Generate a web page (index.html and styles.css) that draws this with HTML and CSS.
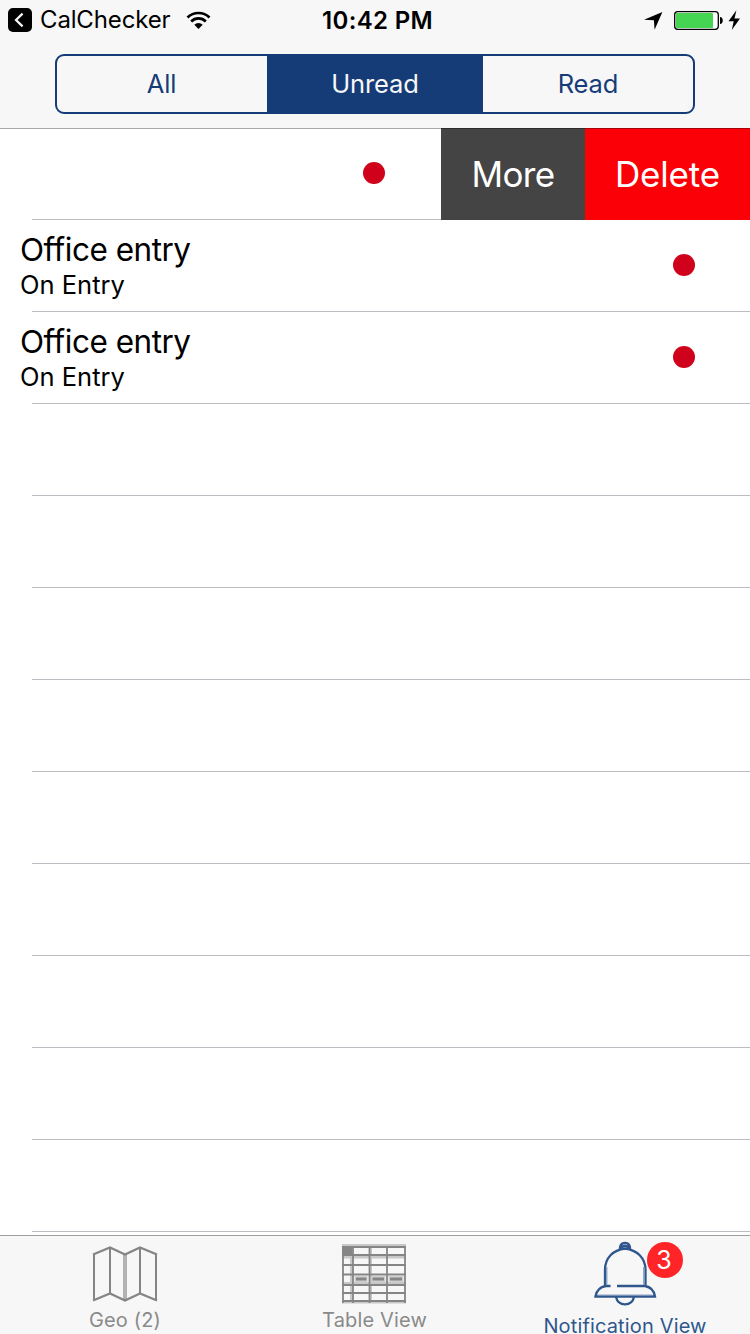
FILE: index.html
```html
<!DOCTYPE html>
<html lang="en">
<head>
<meta charset="utf-8">
<title>Notifications</title>
<link rel="stylesheet" href="styles.css">
</head>
<body>
<div class="screen">
  <header class="header">
    <div class="status">
      <div class="status-left">
        <svg class="back-icon" width="24" height="24" viewBox="0 0 24 24"><rect width="24" height="24" rx="5"/><path d="M14.600 5.600 8 12l6.600 6.400" fill="none" stroke="#f7f7f7" stroke-width="2.200"/></svg>
        <span class="back-app">CalChecker</span>
        <svg class="wifi-icon" width="25" height="19" viewBox="0 0 26 20"><g fill="none" stroke="#000" stroke-width="2.800"><path d="M1.400 6.900a16.400 16.400 0 0 1 23.200 0"/><path d="M5.300 11a10.900 10.900 0 0 1 15.400 0"/></g><path d="M8.600 14.400a6.200 6.200 0 0 1 8.800 0L13 19z"/></svg>
      </div>
      <span class="clock">10:42 PM</span>
      <div class="status-right">
        <svg width="98" height="24" viewBox="0 0 98 24"><path d="M18.400 4 10.600 21.800 9.900 12.300 0 11.800z"/><rect x="30.700" y="3.700" width="43.600" height="17.600" rx="3" fill="#fff" stroke="#000" stroke-width="1.300"/><rect x="32" y="5" width="37" height="15" rx="1" fill="#45d553"/><path d="M76 9c3.700 0 3.700 7 0 7z"/><path d="M92.400 2.200 84.500 13.200h5.200L87.800 22 96 10.600h-5.500z"/></svg>
      </div>
    </div>
    <div class="segments">
      <div class="segment all">All</div>
      <div class="segment selected">Unread</div>
      <div class="segment">Read</div>
    </div>
  </header>
  <main class="list">
    <div class="row swiped">
      <span class="dot"></span>
      <div class="action more">More</div>
      <div class="action delete">Delete</div>
    </div>
    <div class="row entry"><div><div class="title">Office entry</div><div class="subtitle">On Entry</div></div><span class="dot"></span></div>
    <div class="row entry"><div><div class="title">Office entry</div><div class="subtitle">On Entry</div></div><span class="dot"></span></div>
    <div class="row"></div>
    <div class="row"></div>
    <div class="row"></div>
    <div class="row"></div>
    <div class="row"></div>
    <div class="row"></div>
    <div class="row"></div>
    <div class="row"></div>
    <div class="row"></div>
  </main>
  <nav class="tabs">
    <div class="tab">
      <svg width="66" height="66" viewBox="92 1240 66 66" fill="none" stroke="#858585"><path d="M125 1254v46" stroke="#b2b2b2" stroke-width="4"/><path d="M110 1248v46M140 1248v46M94 1254v46M156 1254v46" stroke-width="2"/><path d="m93 1254.500 17-7 15 7 15-7 17 7M93 1300.500l17-7 15 7 15-7 17 7" stroke-width="2.300"/></svg>
      <span class="label">Geo (2)</span>
    </div>
    <div class="tab">
      <svg width="66" height="66" viewBox="342 1240 66 66"><g fill="none" stroke="#c8c8c8" stroke-width="3"><path d="M342 1245.500h64M342 1257h64M342 1283.500h64M342 1302h64M351.500 1245v58M370.500 1245v58"/></g><g fill="none" stroke="#858585" stroke-width="1.800"><path d="M342 1247h64M342 1255h64M342 1265h64M342 1274.500h64M342 1285h64M342 1293h64M342 1301h64M343 1246v57M353 1246v57M369.500 1246v57M387 1246v57M405 1246v57"/></g><path d="M342 1246h10v9h-10z" fill="#858585"/><path d="M354.500 1276h13v6h-13zM371 1276h14.500v6h-14.500zM388.500 1276h15v6h-15z" fill="#cfcfcf"/><path d="M356 1277.500h10.500v3h-10.500zM372.500 1277.500h11.500v3h-11.500zM390 1277.500h12v3h-12z" fill="#858585"/></svg>
      <span class="label table">Table View</span>
    </div>
    <div class="tab active">
      <div class="bell">
        <svg width="66" height="66" viewBox="592 1240 66 66" fill="none" stroke="#2f578d" stroke-width="2.300"><path d="M619.700 1250c0-4.500 1.500-7 5.300-7s5.300 2.500 5.300 7M622.200 1249.500v-1.500a2.800 2.200 0 0 1 5.600 0v1.500"/><path d="M610.500 1286H606c-6 1-9.500 4-10.500 10.500h59.500c-1-6.500-4.500-9.500-10-10.500h-28"/><path d="M605 1286v-16c0-12 8-20 20-21.500 12 1.500 20.500 9.500 20.500 21.500v16"/><path d="M616 1297c1 4.500 4.500 7.300 9 7.300s8-2.800 9-7.300"/><path d="M606.700 1267v18M643.800 1267v18" stroke="#8ca4c3" stroke-width="1.500"/><path d="M598 1295h54" stroke="#8ca4c3" stroke-width="1"/></svg>
        <span class="badge">3</span>
      </div>
      <span class="label notif">Notification View</span>
    </div>
  </nav>
</div>
</body>
</html>
```
FILE: styles.css
```css
* { box-sizing: border-box; }
body { margin: 0; background: #fff; font-family: Inter, sans-serif; color: #000; }
svg { display: block; flex: none; }
.screen { width: 750px; height: 1334px; overflow: hidden; display: flex; flex-direction: column; }
.header { height: 128px; flex: none; background: #f7f7f7; }
.status { height: 40px; display: grid; grid-template-columns: 1fr auto 1fr; align-items: center; white-space: nowrap; }
.status-left { display: flex; align-items: center; padding-left: 8px; }
.back-app { font-size: 24px; line-height: 28px; letter-spacing: -0.15px; margin-left: 8px; padding-bottom: 1px; }
.wifi-icon { margin-left: 16px; }
.clock { font-size: 24px; font-weight: 600; letter-spacing: 0.35px; padding-left: 5px; }
.status-right { display: flex; justify-content: flex-end; padding-right: 8px; }
.segments { margin: 14px 55px 0; height: 60px; display: flex; border: 2px solid #153c77; border-radius: 9px; overflow: hidden; }
.segment { width: 210px; padding-bottom: 2px; display: flex; align-items: center; justify-content: center; font-size: 25.5px; letter-spacing: -0.1px; color: #153c77; }
.segment.all { padding-right: 1px; }
.segment.selected { width: 216px; background: #153c77; color: #f7f7f7; }
.list { height: 1107px; flex: none; overflow: hidden; background: linear-gradient(#a7a7a9 0 1px, transparent 1px); }
.row { height: 92px; margin-left: 32px; border-bottom: 1px solid #bcbbc1; }
.row.swiped { display: flex; align-items: center; }
.swiped .dot { margin-left: 331px; margin-right: 56px; }
.dot { width: 22px; height: 22px; margin-bottom: 1px; border-radius: 50%; background: #d0021b; flex: none; }
.action { height: 92px; align-self: flex-start; padding-bottom: 2px; border-top: 1px solid #2d2d2d; display: flex; align-items: center; justify-content: center; color: #fff; font-size: 35px; letter-spacing: -0.6px; flex: none; }
.more { width: 144px; background: #444; }
.delete { width: 165px; background: #fc0007; border-top-color: #a60008; letter-spacing: -0.2px; }
.entry { display: flex; justify-content: space-between; align-items: center; padding-right: 55px; }
.entry > div { margin-left: -12px; }
.title { font-size: 31.5px; line-height: 40px; letter-spacing: -0.48px; }
.subtitle { font-size: 25.5px; line-height: 30px; padding-bottom: 2px; }
.tabs { height: 99px; flex: none; border-top: 1px solid #9d9d9f; background: #f7f7f7; display: flex; justify-content: space-between; }
.tab { width: 250px; padding-top: 4px; display: flex; flex-direction: column; align-items: center; color: #8a8a8a; }
.tab.active { color: #2f578d; }
.label { font-size: 20px; line-height: 24px; margin-top: 2px; white-space: nowrap; letter-spacing: 0.15px; }
.table { padding-right: 1px; }
.notif { margin-top: 8px; line-height: 20px; padding-top: 2px; }
.bell { position: relative; }
.badge { position: absolute; left: 55px; top: 2px; width: 36px; height: 36px; border-radius: 50%; background: #fe2427; color: #fff; font-size: 25px; line-height: 36px; padding-right: 2px; text-align: center; }
```
